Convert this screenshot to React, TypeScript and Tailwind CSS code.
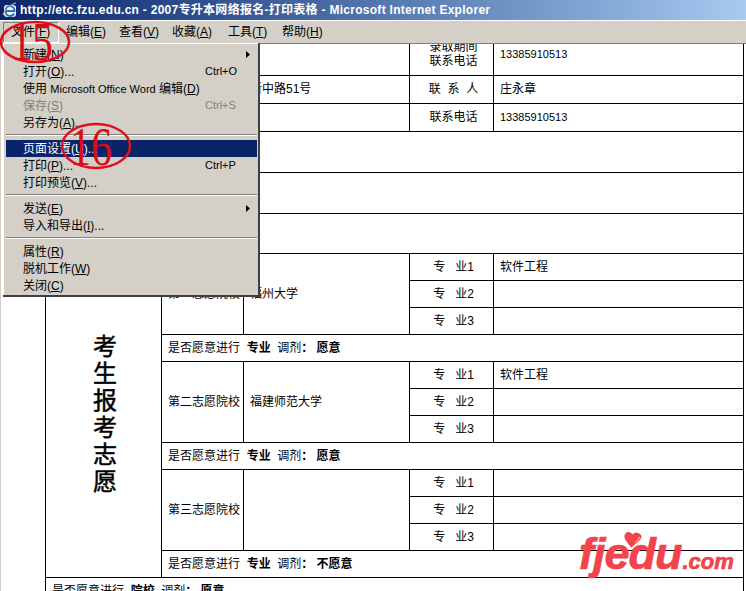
const font = "[font-family:'Liberation_Sans','Noto_Sans_CJK_SC',sans-serif]";

const topMenu = [
  { label: "文件", key: "F", width: "w-[55px]", active: true },
  { label: "编辑", key: "E", width: "w-[53px]" },
  { label: "查看", key: "V", width: "w-[53px]" },
  { label: "收藏", key: "A", width: "w-[56px]" },
  { label: "工具", key: "T", width: "w-[54px]" },
  { label: "帮助", key: "H", width: "w-[54px]" },
];

type Item =
  | { sep: true }
  | { label: React.ReactNode; hot: string; tail?: string; shortcut?: string; arrow?: boolean; disabled?: boolean; selected?: boolean };

const fileMenu: Item[] = [
  { label: "新建", hot: "N", arrow: true },
  { label: "打开", hot: "O", tail: "...", shortcut: "Ctrl+O" },
  {
    label: (
      <>
        使用 <span className="text-[11px]">Microsoft Office Word</span> 编辑
      </>
    ),
    hot: "D",
  },
  { label: "保存", hot: "S", shortcut: "Ctrl+S", disabled: true },
  { label: "另存为", hot: "A", tail: "..." },
  { sep: true },
  { label: "页面设置", hot: "U", tail: "...", selected: true },
  { label: "打印", hot: "P", tail: "...", shortcut: "Ctrl+P" },
  { label: "打印预览", hot: "V", tail: "..." },
  { sep: true },
  { label: "发送", hot: "E", arrow: true },
  { label: "导入和导出", hot: "I", tail: "..." },
  { sep: true },
  { label: "属性", hot: "R" },
  { label: "脱机工作", hot: "W" },
  { label: "关闭", hot: "C" },
];

function FileMenu() {
  return (
    <div className="absolute left-[3px] top-[43px] z-10 flex w-[257px] flex-col border-r-2 border-b-2 border-r-[#404040] border-b-[#404040] bg-[#d4d0c8] pt-[3px] pr-[1px] pb-[1px] pl-[3px] shadow-[inset_1px_1px_0_#fff]">
      {fileMenu.map((item, i) =>
        "sep" in item ? (
          <div key={i} className="mt-[3px] mb-[4px] h-[2px] border-t border-b border-t-[#808080] border-b-white" />
        ) : (
          <div
            key={i}
            className={`flex h-[17px] items-center justify-between pr-[7px] pl-[17px] text-[12px] leading-none ${
              item.selected ? "bg-[#0a246a] text-white" : item.disabled ? "text-[#808080]" : "text-black"
            }`}
          >
            <span>
              {item.label}(<span className="underline">{item.hot}</span>){item.tail}
            </span>
            {item.shortcut && <span className="mr-[9px] w-[36px] text-[11px] whitespace-nowrap">{item.shortcut}</span>}
            {item.arrow && (
              <svg width="4" height="7" viewBox="0 0 4 7">
                <path d="M0 0l4 3.5L0 7z" fill="#000" />
              </svg>
            )}
          </div>
        )
      )}
    </div>
  );
}

function Cell({ children, className = "", ...rest }: React.TdHTMLAttributes<HTMLTableCellElement>) {
  return (
    <td className={`border border-black p-0 align-middle ${className}`} {...rest}>
      {children}
    </td>
  );
}

function Major({ n, value }: { n: number; value?: string }) {
  return (
    <>
      <Cell className="pl-[4px] text-center whitespace-pre">{`专   业${n}`}</Cell>
      <Cell className="pl-[6px]">{value}</Cell>
    </>
  );
}

function Adjust({ kind, answer, colSpan = 4 }: { kind: string; answer: string; colSpan?: number }) {
  return (
    <Cell colSpan={colSpan} className="pl-[6px] whitespace-pre">
      是否愿意进行  <b>{kind}</b>  调剂<b>：</b>
      <b className="ml-[3px]">{answer}</b>
    </Cell>
  );
}

function Wish({ first, title, school, major, answer }: { first?: boolean; title: string; school?: string; major?: string; answer: string }) {
  return (
    <>
      <tr className="h-[27px]">
        {first && (
          <Cell rowSpan={12} className="pb-[3px] pl-[3px] text-center text-[24px] leading-[27px] [-webkit-text-stroke:0.5px_#000]">
            {["考", "生", "报", "考", "志", "愿"].map((c, i) => (
              <div key={i}>{c}</div>
            ))}
          </Cell>
        )}
        <Cell rowSpan={3} className="pl-[6px]">{title}</Cell>
        <Cell rowSpan={3} className="pl-[6px]">{school}</Cell>
        <Major n={1} value={major} />
      </tr>
      <tr className="h-[27px]">
        <Major n={2} />
      </tr>
      <tr className="h-[27px]">
        <Major n={3} />
      </tr>
      <tr className="h-[27px]">
        <Adjust kind="专业" answer={answer} />
      </tr>
    </>
  );
}

function Annotations() {
  return (
    <svg width="746" height="591" className="pointer-events-none absolute top-0 left-0 z-20">
      <ellipse cx="35" cy="42" rx="34" ry="20" fill="none" stroke="#e0101c" strokeWidth="2.5" />
      <text x="11" y="60" fontSize="54" fill="#d80c18" fontFamily="Liberation Serif" textLength="42" lengthAdjust="spacingAndGlyphs">
        15
      </text>
      <ellipse cx="96" cy="146" rx="34" ry="22" fill="none" stroke="#e0101c" strokeWidth="2.5" />
      <text x="70" y="165" fontSize="54" fill="#d80c18" fontFamily="Liberation Serif" textLength="42" lengthAdjust="spacingAndGlyphs">
        16
      </text>
    </svg>
  );
}

function Watermark() {
  return (
    <div className="absolute top-[526px] left-[579px] z-20 flex h-[56px] w-[160px] items-baseline [font-family:'Liberation_Sans',sans-serif] font-bold text-[#f2444c] italic [-webkit-text-stroke:0.7px_#f2444c]">
      <span className="text-[45px] leading-[56px] tracking-[-1px]">fjedu</span>
      <span className="ml-[1px] text-[22px] leading-none">.com</span>
      <svg width="20" height="20" viewBox="0 0 26 24" className="absolute top-[4px] left-[44px]">
        <path d="M11 22C6 15 1 12 2 6c1-5 8-6 10-1 3-4 11-3 12 2 0 6-8 9-13 15z" fill="#f2444c" stroke="none" />
        <path d="M16 15c3-2 5-4 5-7" fill="none" stroke="#fff" strokeWidth="1" />
      </svg>
    </div>
  );
}

export default function App() {
  return (
    <div className={`relative h-[591px] w-[746px] overflow-hidden bg-white ${font}`}>
      <div className="flex h-[20px] items-center bg-gradient-to-r from-[#0a246a] to-[#a6caf0] pl-[2px]">
        <svg width="16" height="16" viewBox="0 0 16 16">
          <rect x="2" y="3" width="12" height="12" rx="3" fill="#eef6ff" />
          <path d="M3.5 9h9c0-3-2-5-4.5-5S3.5 6 3.5 9s2 5 4.5 5c2 0 3.5-1 4-2.5" fill="none" stroke="#2b6fc0" strokeWidth="2" />
          <path d="M1 13C3 7 9 2 14 1" fill="none" stroke="#f0c040" strokeWidth="1" />
        </svg>
        <span className="ml-[2px] text-[12px] font-bold tracking-[0.28px] whitespace-pre text-white">
          http://etc.fzu.edu.cn - 2007专升本网络报名-打印表格 - Microsoft Internet Explorer
        </span>
      </div>
      <div className="flex h-[24px] items-center border-t border-b border-t-white border-b-[#808080] bg-[#d4d0c8] pl-[3px] text-[12px] text-black">
        {topMenu.map((m) => (
          <div
            key={m.key}
            className={`flex h-[20px] items-center pl-[8px] ${m.width} ${
              m.active ? "shadow-[inset_1px_1px_0_#808080,1px_1px_0_#fff]" : ""
            }`}
          >
            {m.label}(<span className="underline">{m.key}</span>)
          </div>
        ))}
      </div>

      <div className="h-[547px] overflow-hidden border-l border-l-[#d4d0c8] pl-[44px]">
        <table className="-mt-[11px] w-[699px] table-fixed border-collapse text-[12px] leading-[14px] text-black">
          <colgroup>
            <col className="w-[116px]" />
            <col className="w-[82px]" />
            <col className="w-[166px]" />
            <col className="w-[84px]" />
            <col />
          </colgroup>
          <tbody>
            <tr className="h-[42px]">
              <Cell rowSpan={6} />
              <Cell colSpan={2} />
              <Cell className="pb-[2px] pl-[4px] text-center">
                录取期间
                <br />
                联系电话
              </Cell>
              <Cell className="pb-[2px] pl-[6px] text-[11px]">13385910513</Cell>
            </tr>
            <tr className="h-[28px]">
              <Cell />
              <Cell className="pb-[2px] pl-[6px]">新中路51号</Cell>
              <Cell className="pb-[2px] pl-[4px] text-center whitespace-pre">联  系  人</Cell>
              <Cell className="pb-[2px] pl-[6px]">庄永章</Cell>
            </tr>
            <tr className="h-[28px]">
              <Cell colSpan={2} />
              <Cell className="pb-[2px] pl-[4px] text-center">联系电话</Cell>
              <Cell className="pb-[2px] pl-[6px] text-[11px]">13385910513</Cell>
            </tr>
            <tr className="h-[41px]">
              <Cell colSpan={4} />
            </tr>
            <tr className="h-[41px]">
              <Cell colSpan={4} />
            </tr>
            <tr className="h-[40px]">
              <Cell colSpan={4} />
            </tr>
            <Wish first title="第一志愿院校" school="福州大学" major="软件工程" answer="愿意" />
            <Wish title="第二志愿院校" school="福建师范大学" major="软件工程" answer="愿意" />
            <Wish title="第三志愿院校" answer="不愿意" />
            <tr className="h-[27px]">
              <Adjust kind="院校" answer="愿意" colSpan={5} />
            </tr>
          </tbody>
        </table>
      </div>
      <FileMenu />
      <Annotations />
      <Watermark />
    </div>
  );
}
